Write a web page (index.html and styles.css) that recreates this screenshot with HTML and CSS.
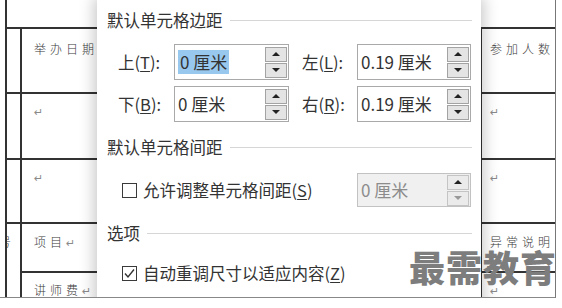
FILE: index.html
```html
<!DOCTYPE html>
<html lang="zh-CN">
    <head>
        <meta charset="utf-8">
        <title>表格选项</title>
        <link rel="stylesheet" href="styles.css">
    </head>
    <body>
        <div class="page"> <!-- the document page behind the dialog -->
            <table class="doc">
                <colgroup>
                    <col class="c-num">
                    <col class="c-a">
                    <col class="c-b">
                    <col class="c-c">
                </colgroup>
                <tr class="r0"><td colspan="4"></td></tr>
                <tr class="r1"><td></td><td><span class="hw">举办日期</span></td><td></td><td class="last"><span class="hw">参加人数</span></td></tr>
                <tr class="r2"><td></td><td><span class="mark">↵</span></td><td></td><td class="last"><span class="mark">↵</span></td></tr>
                <tr class="r3"><td></td><td><span class="mark">↵</span></td><td></td><td class="last"><span class="mark">↵</span></td></tr>
                <tr class="r4"><td rowspan="2" class="cut"><span class="hw">号</span></td><td><span class="hw">项目</span><span class="mark">↵</span></td><td></td><td class="last"><span class="hw">异常说明</span></td></tr>
                <tr class="r5"><td><span class="hw">讲师费</span><span class="mark">↵</span></td><td></td><td class="last"><span class="mark">↵</span></td></tr>
            </table>

            <div class="dialog"> <!-- table options dialog, lies over the page -->
                <div class="group-title">默认单元格边距</div>
                <div class="margins">
                    <div class="pair">
                        <div class="field">
                            <label class="lbl">上(<u>T</u>):</label>
                            <div class="spin"><span class="val"><span class="sel">0 厘米</span></span><span class="btns"><i class="up"></i><i class="down"></i></span></div>
                        </div>
                        <div class="field">
                            <label class="lbl lbl-r">左(<u>L</u>):</label>
                            <div class="spin spin-r"><span class="val">0.19 厘米</span><span class="btns"><i class="up"></i><i class="down"></i></span></div>
                        </div>
                    </div>
                    <div class="pair">
                        <div class="field">
                            <label class="lbl">下(<u>B</u>):</label>
                            <div class="spin"><span class="val">0 厘米</span><span class="btns"><i class="up"></i><i class="down"></i></span></div>
                        </div>
                        <div class="field">
                            <label class="lbl lbl-r">右(<u>R</u>):</label>
                            <div class="spin spin-r"><span class="val">0.19 厘米</span><span class="btns"><i class="up"></i><i class="down"></i></span></div>
                        </div>
                    </div>
                </div>

                <div class="group-title g2">默认单元格间距</div>
                <div class="check-row spacing">
                    <span class="box"></span>
                    <span class="check-text">允许调整单元格间距(<u>S</u>)</span>
                    <div class="spin spin-r disabled"><span class="val">0 厘米</span><span class="btns"><i class="up"></i><i class="down"></i></span></div>
                </div>

                <div class="group-title g3">选项</div>
                <div class="check-row autofit">
                    <span class="box">
                        <svg width="13" height="13" viewBox="0 0 13 13"><polyline points="2,6.5 5,10 11,2.5" fill="none" stroke="#333" stroke-width="1.4"/></svg>
                    </span>
                    <span class="check-text">自动重调尺寸以适应内容(<u>Z</u>)</span>
                </div>
            </div>

            <div class="watermark">最需教育</div>
        </div>
    </body>
</html>
```

FILE: styles.css
```css
/* page and document table */
*{
    margin: 0;
    padding: 0;
    box-sizing: border-box;
}
body{
    background: #fff;
    font-family: "Noto Sans CJK SC", "Noto Sans", sans-serif;
    color: #333;
}
.page{
    position: relative; /* the dialog and the watermark sit over it */
    width: 556px;
    height: 298px;
    border-right: 1px solid #777;
    border-bottom: 1px solid #888;
    overflow: hidden;
}
.doc{
    margin-left: 5px;
    width: 560px;
    table-layout: fixed;
    border-collapse: collapse;
}
.doc td{
    border: 2px solid #333;
    vertical-align: top;
    padding: 7px 0 0 12px;
    overflow: hidden;
    white-space: nowrap;
    line-height: 16px;
}
.doc td.last{ padding-left: 8px; }
.doc .r0 td{ border-top: none; height: 28px; }
.doc .r1 td{ height: 65px; padding-top: 10px; }
.doc .r2 td{ height: 66px; }
.doc .r3 td{ height: 64px; }
.doc .r4 td{ height: 49px; padding-top: 8px; }
.doc .r5 td{ height: 40px; padding-top: 7px; }
.c-num{ width: 15px; }
.c-a{ width: 230px; }
.c-b{ width: 230px; }
.c-c{ width: 85px; }
.doc td.cut{ padding: 8px 0 0 0; text-indent: -8px; }
.hw{
    font-size: 12px;
    letter-spacing: 4px;
    color: #3a3a3a;
    font-weight: 300;
}
.mark{
    font-family: "DejaVu Sans", sans-serif;
    font-size: 11px;
    color: #8a8a8a;
}

/* dialog */
.dialog{
    position: absolute;
    left: 97px;
    top: 0;
    width: 384px;
    height: 320px;
    background: #fff;
    padding: 11px 10px 0 10px;
    box-shadow: 0 0 14px 3px rgba(0, 0, 0, .22);
    font-size: 16.5px;
    color: #333;
}
.group-title{
    display: flex;
    align-items: center;
    height: 18px;
    line-height: 18px;
}
.group-title::after{
    content: "";
    flex: 1;
    height: 1px;
    margin-left: 7px;
    margin-right: -1px;
    background: #d6d6d6;
}
.g2{ margin-top: 16px; }
.g3{ margin-top: 17px; }
.margins{
    margin-top: 15px;
    padding-left: 11px;
    display: flex;
    flex-direction: column;
    gap: 6px;
}
.pair{
    display: flex;
    gap: 13px;
}
.field{
    display: flex;
    align-items: center;
}
.lbl{ width: 56px; }
.lbl-r{ width: 55px; }
u{ text-decoration: underline; text-underline-offset: 2px; }

/* spin box */
.spin{
    width: 115px;
    height: 36px;
    border: 1px solid #a9a9a9;
    background: #fff;
    display: flex;
    align-items: center;
    padding: 0 1px 0 3px;
}
.spin-r{ width: 114px; }
.val{
    flex: 1;
    font-size: 17px;
    color: #333;
    line-height: 24px;
}
.sel{
    background: #99c8ee;
    padding: 0 2px;
    display: inline-block;
    line-height: 24px;
}
.btns{
    width: 22px;
    display: flex;
    flex-direction: column;
    gap: 1px;
}
.btns i{
    height: 15px;
    border: 1px solid #a3a3a3;
    background: #e4e4e4;
    display: flex;
    align-items: center;
    justify-content: center;
}
.btns i::before{
    content: "";
    border-left: 4px solid transparent;
    border-right: 4px solid transparent;
}
.btns .up::before{ border-bottom: 4px solid #222; }
.btns .down::before{ border-top: 4px solid #222; }
.disabled{
    height: 34px;
    background: #f0f0f0;
    border-color: #c2c2c2;
}
.disabled .val{ color: #8c8c8c; }
.disabled .btns i{ border-color: #c4c4c4; background: #ebebeb; }
.disabled .btns .down::before{ border-top-color: #999; }

/* check boxes */
.check-row{
    display: flex;
    align-items: center;
    padding-left: 15px;
}
.spacing{ margin-top: 17px; height: 34px; }
.autofit{ margin-top: 21px; height: 20px; }
.box{
    width: 15px;
    height: 15px;
    border: 1.5px solid #3a3a3a;
    display: flex;
    align-items: center;
    justify-content: center;
    margin-right: 6px;
}
.spacing .spin{ margin-left: auto; }

/* watermark */
.watermark{
    position: absolute;
    left: 409px;
    top: 248px;
    font-size: 36px;
    font-weight: 900;
    line-height: 1;
    letter-spacing: 1px;
    white-space: nowrap;
    color: #7d7d7d;
}
```
